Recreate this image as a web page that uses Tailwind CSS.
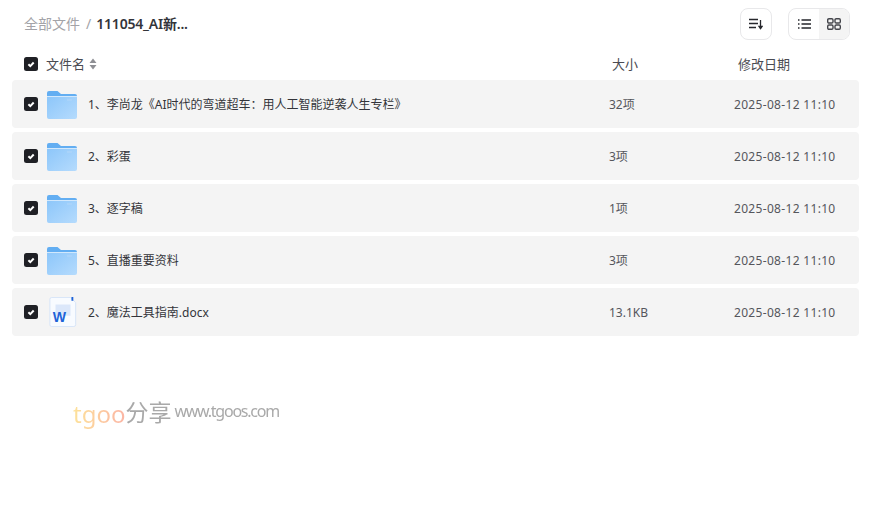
<!doctype html>
<html>
  <head>
    <meta charset="UTF-8" />
    <title>全部文件</title>
    <script src="https://cdn.jsdelivr.net/npm/@tailwindcss/browser@4"></script>
  </head>
  <body class="relative h-[514px] w-[874px] overflow-hidden bg-white font-['Noto_Sans','Noto_Sans_CJK_SC',sans-serif] text-[12px] text-[#25262b]">
    <svg width="0" height="0" class="absolute">
      <defs>
        <linearGradient id="folderFront" x1="0" y1="0" x2="1" y2="1">
          <stop offset="0" stop-color="#8cc6fa" />
          <stop offset="1" stop-color="#b5dbfd" />
        </linearGradient>
        <symbol id="check" viewBox="0 0 14 14">
          <rect width="14" height="14" rx="2.5" fill="#1f2025" />
          <path d="M4.400 7.200l1.900 1.900 3.400-3.600" fill="none" stroke="#fff" stroke-width="2" />
        </symbol>
        <symbol id="folder" viewBox="0 0 30 28">
          <path d="M0 2a2 2 0 0 1 2-2h8.500l3.500 3h14a2 2 0 0 1 2 2v4H0z" fill="#63aef2" />
          <path d="M0 5h30v21a2 2 0 0 1-2 2H2a2 2 0 0 1-2-2z" fill="url(#folderFront)" />
          <path d="M0 5h30v1H0z" fill="#d2e8fc" />
          <rect x="20" y="8" width="5" height="2" fill="#a9d3fa" />
        </symbol>
      </defs>
    </svg>

    <div class="flex h-[48px] items-center justify-between pl-[24px] pr-[24px]">
      <div class="flex items-center pb-[2px] text-[14px]">
        <span class="text-[#a3a3a8]">全部文件</span>
        <span class="ml-[6px] mr-[5px] text-[#a3a3a8]">/</span>
        <span class="font-semibold tracking-[-0.2px] text-[#33343a]">111054_AI新...</span>
      </div>
      <div class="flex items-center gap-[16px]">
        <button class="flex h-[32px] w-[32px] items-center justify-center rounded-[8px] border border-[#e8e8ea]">
          <svg width="14" height="12" viewBox="0 0 14 12" fill="none" stroke="#26272c" stroke-width="1.300">
            <path d="M0 1.500h9M0 5.500h9M0 9.500h7" />
            <path d="M11.500 2v8.500" />
            <path d="M10 8.500l1.500 2.200 1.500-2.200z" fill="#26272c" />
          </svg>
        </button>
        <div class="flex h-[32px] w-[62px] overflow-hidden rounded-[8px] border border-[#e8e8ea]">
          <div class="flex w-[30px] items-center justify-center">
            <svg width="13" height="10" viewBox="0 0 13 10" fill="none" stroke="#26272c" stroke-width="1.300">
              <path d="M0 1h1.500M3.500 1H13M0 5h1.500M3.500 5H13M0 9h1.500M3.500 9H13" />
            </svg>
          </div>
          <div class="flex flex-1 items-center justify-center bg-[#f4f4f4]">
            <svg width="14" height="12" viewBox="0 0 14 12" fill="none" stroke="#44454b" stroke-width="1.400">
              <rect x="0.700" y="0.700" width="5.300" height="4.300" rx="1.200" />
              <rect x="8" y="0.700" width="5.300" height="4.300" rx="1.200" />
              <rect x="0.700" y="7" width="5.300" height="4.300" rx="1.200" />
              <rect x="8" y="7" width="5.300" height="4.300" rx="1.200" />
            </svg>
          </div>
        </div>
      </div>
    </div>

    <div class="flex h-[32px] items-center pl-[24px] text-[13px] text-[#4a4b52]">
      <svg width="14" height="14"><use href="#check" /></svg>
      <span class="ml-[8px] pt-[1px]">文件名</span>
      <svg class="ml-[4px]" width="8" height="12" viewBox="0 0 8 12" fill="#8e8f94">
        <path d="M4 .5l3.500 4.500H.5zM4 11.500L.5 7h7z" />
      </svg>
      <span class="ml-[515px] w-[126px] pt-[1px]">大小</span>
      <span class="pt-[1px]">修改日期</span>
    </div>

    <div class="flex w-[847px] flex-col gap-[4px] ml-[12px]">
      <div class="flex h-[48px] items-center rounded-[4px] bg-[#f4f4f4] pl-[12px]">
        <svg width="14" height="14"><use href="#check" /></svg>
        <svg class="ml-[9px] mt-[1px]" width="30" height="28"><use href="#folder" /></svg>
        <span class="ml-[11px] w-[521px] pt-[2px] text-[#33343a]">1、李尚龙《AI时代的弯道超车：用人工智能逆袭人生专栏》</span>
        <span class="w-[125px] pt-[2px] text-[#55565c]">32项</span>
        <span class="pt-[2px] tracking-[0.32px] text-[#55565c]">2025-08-12 11:10</span>
      </div>
      <div class="flex h-[48px] items-center rounded-[4px] bg-[#f4f4f4] pl-[12px]">
        <svg width="14" height="14"><use href="#check" /></svg>
        <svg class="ml-[9px] mt-[1px]" width="30" height="28"><use href="#folder" /></svg>
        <span class="ml-[11px] w-[521px] pt-[2px] text-[#33343a]">2、彩蛋</span>
        <span class="w-[125px] pt-[2px] text-[#55565c]">3项</span>
        <span class="pt-[2px] tracking-[0.32px] text-[#55565c]">2025-08-12 11:10</span>
      </div>
      <div class="flex h-[48px] items-center rounded-[4px] bg-[#f4f4f4] pl-[12px]">
        <svg width="14" height="14"><use href="#check" /></svg>
        <svg class="ml-[9px] mt-[1px]" width="30" height="28"><use href="#folder" /></svg>
        <span class="ml-[11px] w-[521px] pt-[2px] text-[#33343a]">3、逐字稿</span>
        <span class="w-[125px] pt-[2px] text-[#55565c]">1项</span>
        <span class="pt-[2px] tracking-[0.32px] text-[#55565c]">2025-08-12 11:10</span>
      </div>
      <div class="flex h-[48px] items-center rounded-[4px] bg-[#f4f4f4] pl-[12px]">
        <svg width="14" height="14"><use href="#check" /></svg>
        <svg class="ml-[9px] mt-[1px]" width="30" height="28"><use href="#folder" /></svg>
        <span class="ml-[11px] w-[521px] pt-[2px] text-[#33343a]">5、直播重要资料</span>
        <span class="w-[125px] pt-[2px] text-[#55565c]">3项</span>
        <span class="pt-[2px] tracking-[0.32px] text-[#55565c]">2025-08-12 11:10</span>
      </div>
      <div class="flex h-[48px] items-center rounded-[4px] bg-[#f4f4f4] pl-[12px]">
        <svg width="14" height="14"><use href="#check" /></svg>
        <svg class="ml-[11px]" width="28" height="30" viewBox="0 0 28 32">
          <path d="M2 .5h20l5.500 5.500v23.500a2 2 0 0 1-2 2H2a2 2 0 0 1-2-2V2.500a2 2 0 0 1 2-2z" fill="#f8fbff" stroke="#d5e3f7" />
          <rect x="6" y="8" width="16" height="12" fill="#dbe7fa" />
          <rect x="23" y="0" width="2" height="4" fill="#1d63d8" />
          <text x="3" y="27" font-family="Liberation Sans" font-size="15" font-weight="700" fill="#1d63d8">W</text>
        </svg>
        <span class="ml-[11px] w-[521px] pt-[2px] text-[#33343a]">2、魔法工具指南.docx</span>
        <span class="w-[125px] pt-[2px] text-[#55565c]">13.1KB</span>
        <span class="pt-[2px] tracking-[0.32px] text-[#55565c]">2025-08-12 11:10</span>
      </div>
    </div>

    <div class="absolute left-[73px] top-[394px] flex items-center whitespace-nowrap blur-[0.3px]">
      <span class="mt-[4px] bg-gradient-to-r from-[#fde29a] to-[#fbb5a4] bg-clip-text text-[24px] leading-[32px] text-transparent">tgoo</span>
      <span class="text-[23px] leading-[32px] text-[#a9a9a9]">分享</span>
      <span class="ml-[3px] mt-[-2px] text-[16px] leading-[32px] tracking-[-1.25px] text-[#a9a9a9]">www.tgoos.com</span>
    </div>
  </body>
</html>
